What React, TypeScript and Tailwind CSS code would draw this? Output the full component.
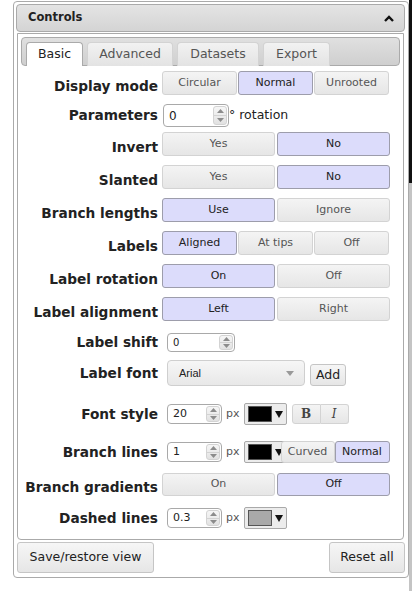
import type { ReactNode } from 'react';

function Tri({ up }: { up?: boolean }) {
  return (
    <svg width="7" height="4" viewBox="0 0 7 4">
      <path d={up ? 'M0 4L3.5 0L7 4Z' : 'M0 0L3.5 4L7 0Z'} fill="#8c8c8c" />
    </svg>
  );
}

function Spinner({ value, w, h, size }: { value: string; w: string; h: string; size: string }) {
  return (
    <div className={`flex ${w} ${h} rounded-[4px] border border-[#a9a9a9] bg-white`}>
      <div className={`flex flex-1 items-center pl-[5px] ${size} text-[#222]`}>{value}</div>
      <div className="my-[1px] mr-[1px] flex w-[14px] flex-col rounded-[3px] border border-[#d3d3d3] bg-linear-to-b from-[#f6f6f6] to-[#e2e2e2]">
        <div className="flex flex-1 items-center justify-center border-b border-[#d3d3d3]">
          <Tri up />
        </div>
        <div className="flex flex-1 items-center justify-center">
          <Tri />
        </div>
      </div>
    </div>
  );
}

function ColorPick({ swatch }: { swatch: string }) {
  return (
    <div className="flex h-[22px] w-[43px] shrink-0 items-center rounded-[2px] border border-[#a9a9a9] bg-[#ececec] pl-[3px]">
      <div className={`h-[16px] w-[24px] border border-[#555] ${swatch}`} />
      <svg className="ml-[3px]" width="8" height="8" viewBox="0 0 8 8">
        <path d="M0 1L8 1L4 8Z" fill="#111" />
      </svg>
    </div>
  );
}

function Seg({ label, on, w }: { label: string; on?: boolean; w: string }) {
  return (
    <div
      className={`${w} flex h-full items-center justify-center rounded-[3px] border text-[11px] ${
        on
          ? 'border-[#9d9dab] bg-[#dcdcfb] text-[#222]'
          : 'border-[#d3d3d3] bg-linear-to-b from-[#f4f4f4] to-[#e6e6e6] text-[#555]'
      }`}
    >
      {label}
    </div>
  );
}

function Two({ a, b, sel }: { a: string; b: string; sel: 0 | 1 }) {
  return (
    <div className="flex h-full gap-[2px]">
      <Seg label={a} on={sel === 0} w="w-[113px]" />
      <Seg label={b} on={sel === 1} w="w-[113px]" />
    </div>
  );
}

function Three({ opts, sel }: { opts: string[]; sel: number }) {
  return (
    <div className="flex h-full gap-[1px]">
      {opts.map((o, i) => (
        <Seg key={o} label={o} on={sel === i} w="w-[75px]" />
      ))}
    </div>
  );
}

function Row({
  label,
  mt,
  h,
  low,
  children,
}: {
  label: string;
  mt: string;
  h: string;
  low?: boolean;
  children: ReactNode;
}) {
  return (
    <div className={`flex items-center ${mt} ${h}`}>
      <div className={`w-[140px] shrink-0 whitespace-nowrap text-right text-[13.7px] font-bold text-[#222] ${low ? 'pt-[6px]' : ''}`}>
        {label}
      </div>
      <div className="ml-[4px] flex h-full items-center">{children}</div>
    </div>
  );
}

const tabs = [
  { name: 'Basic', w: 'w-[57px]' },
  { name: 'Advanced', w: 'w-[86px]' },
  { name: 'Datasets', w: 'w-[82px]' },
  { name: 'Export', w: 'w-[67px]' },
];

export default function App() {
  return (
    <div className="flex h-[591px] w-[412px] bg-white font-['DejaVu_Sans',Verdana,sans-serif]">
      <div className="w-[409px] pl-[13px] pt-[1px]">
        <div className="flex h-[577px] w-[396px] flex-col rounded-[4px] border border-[#aaa] pl-[2px] pr-[3px] pt-[2px]">
          {/* header */}
          <div className="flex h-[28px] items-center justify-between rounded-[4px] border border-[#aaa] bg-linear-to-b from-[#e4e4e4] to-[#d4d4d4] pl-[11px] pr-[10px]">
            <span className="text-[11.5px] font-bold text-[#222]">Controls</span>
            <svg width="10" height="7" viewBox="0 0 10 7">
              <path d="M1 6L5 2L9 6" stroke="#111" strokeWidth="2.4" fill="none" />
            </svg>
          </div>

          {/* content */}
          <div className="mx-[1px] mt-[1px] rounded-b-[4px] border border-[#aaa] bg-white px-[3px] pb-[10px] pt-[3px]">
            <div className="flex gap-[4px] rounded-[4px] border border-[#aaa] bg-linear-to-b from-[#e0e0e0] to-[#cfcfcf] px-[4px] pt-[4px]">
              {tabs.map((t, i) => (
                <div
                  key={t.name}
                  className={`${t.w} -mb-[1px] flex h-[24px] items-center justify-center rounded-t-[4px] border border-b-0 text-[12.5px] ${
                    i === 0
                      ? 'border-[#aaa] bg-white text-[#222]'
                      : 'border-[#d3d3d3] bg-linear-to-b from-[#f2f2f2] to-[#e3e3e3] text-[#555]'
                  }`}
                >
                  {t.name}
                </div>
              ))}
            </div>

            <div className="-mx-[3px] flex flex-col">
              <Row label="Display mode" mt="mt-[5px]" h="h-[24px]" low>
                <Three opts={['Circular', 'Normal', 'Unrooted']} sel={1} />
              </Row>
              <Row label="Parameters" mt="mt-[9px]" h="h-[23px]">
                <div className="ml-[1px] flex items-center">
                  <Spinner value="0" w="w-[66px]" h="h-[23px]" size="text-[12px]" />
                  <span className="text-[12.5px] text-[#222]">° rotation</span>
                </div>
              </Row>
              <Row label="Invert" mt="mt-[5px]" h="h-[24px]" low>
                <Two a="Yes" b="No" sel={1} />
              </Row>
              <Row label="Slanted" mt="mt-[9px]" h="h-[24px]" low>
                <Two a="Yes" b="No" sel={1} />
              </Row>
              <Row label="Branch lengths" mt="mt-[9px]" h="h-[24px]" low>
                <Two a="Use" b="Ignore" sel={0} />
              </Row>
              <Row label="Labels" mt="mt-[9px]" h="h-[24px]" low>
                <Three opts={['Aligned', 'At tips', 'Off']} sel={0} />
              </Row>
              <Row label="Label rotation" mt="mt-[9px]" h="h-[24px]" low>
                <Two a="On" b="Off" sel={0} />
              </Row>
              <Row label="Label alignment" mt="mt-[9px]" h="h-[24px]" low>
                <Two a="Left" b="Right" sel={0} />
              </Row>
              <Row label="Label shift" mt="mt-[12px]" h="h-[19px]">
                <div className="ml-[5px]">
                  <Spinner value="0" w="w-[68px]" h="h-[19px]" size="text-[10px]" />
                </div>
              </Row>
              <Row label="Label font" mt="mt-[8px]" h="h-[26px]">
                <div className="ml-[5px] flex items-center gap-[5px]">
                  <div className="flex h-[26px] w-[138px] items-center justify-between rounded-[4px] border border-[#cfcfcf] bg-linear-to-b from-[#f6f6f6] to-[#e8e8e8] pl-[11px] pr-[10px]">
                    <span className="font-['Liberation_Sans',Arial,sans-serif] text-[11px] text-[#222]">Arial</span>
                    <svg width="8" height="5" viewBox="0 0 8 5">
                      <path d="M0 0L8 0L4 5Z" fill="#999" />
                    </svg>
                  </div>
                  <div className="mt-[4px] flex h-[22px] w-[36px] items-center justify-center rounded-[3px] border border-[#c5c5c5] bg-linear-to-b from-[#f6f6f6] to-[#e6e6e6] text-[12.5px] text-[#222]">
                    Add
                  </div>
                </div>
              </Row>
              <Row label="Font style" mt="mt-[17px]" h="h-[22px]">
                <div className="ml-[5px] flex items-center">
                  <Spinner value="20" w="w-[55px]" h="h-[20px]" size="text-[11px]" />
                  <span className="ml-[4px] mr-[4px] text-[11px] text-[#555]">px</span>
                  <ColorPick swatch="bg-black" />
                  <div className="ml-[5px] flex h-[20px]">
                    <div className="flex w-[29px] items-center justify-center rounded-l-[3px] border border-[#d3d3d3] bg-linear-to-b from-[#f4f4f4] to-[#e6e6e6] font-['DejaVu_Serif',serif] text-[12px] font-bold text-[#444]">
                      B
                    </div>
                    <div className="flex w-[28px] items-center justify-center rounded-r-[3px] border border-l-0 border-[#d3d3d3] bg-linear-to-b from-[#f4f4f4] to-[#e6e6e6] font-['DejaVu_Serif',serif] text-[12px] italic text-[#444]">
                      I
                    </div>
                  </div>
                </div>
              </Row>
              <Row label="Branch lines" mt="mt-[16px]" h="h-[22px]">
                <div className="ml-[5px] flex h-full items-center">
                  <Spinner value="1" w="w-[55px]" h="h-[20px]" size="text-[11px]" />
                  <span className="ml-[4px] mr-[4px] text-[11px] text-[#555]">px</span>
                  <ColorPick swatch="bg-black" />
                  <div className="-ml-[6px] flex h-full">
                    <Seg label="Curved" w="w-[54px]" />
                    <Seg label="Normal" on w="w-[55px]" />
                  </div>
                </div>
              </Row>
              <Row label="Branch gradients" mt="mt-[10px]" h="h-[23px]" low>
                <Two a="On" b="Off" sel={1} />
              </Row>
              <Row label="Dashed lines" mt="mt-[11px]" h="h-[22px]">
                <div className="ml-[5px] flex items-center">
                  <Spinner value="0.3" w="w-[55px]" h="h-[20px]" size="text-[11px]" />
                  <span className="ml-[4px] mr-[4px] text-[11px] text-[#555]">px</span>
                  <ColorPick swatch="bg-[#a9a9a9]" />
                </div>
              </Row>
            </div>
          </div>

          {/* footer buttons */}
          <div className="ml-[1px] mt-[2px] flex justify-between">
            <div className="flex h-[31px] w-[137px] items-center justify-center rounded-[3px] border border-[#c5c5c5] bg-linear-to-b from-[#f6f6f6] to-[#e6e6e6] text-[12.5px] text-[#222]">
              Save/restore view
            </div>
            <div className="flex h-[31px] w-[76px] items-center justify-center rounded-[3px] border border-[#c5c5c5] bg-linear-to-b from-[#f6f6f6] to-[#e6e6e6] text-[12.5px] text-[#222]">
              Reset all
            </div>
          </div>
        </div>
      </div>
      <div className="flex w-[3px] flex-col">
        <div className="h-[183px] bg-[#111]" />
        <div className="flex-1 bg-[#c4c4c4]" />
      </div>
    </div>
  );
}
